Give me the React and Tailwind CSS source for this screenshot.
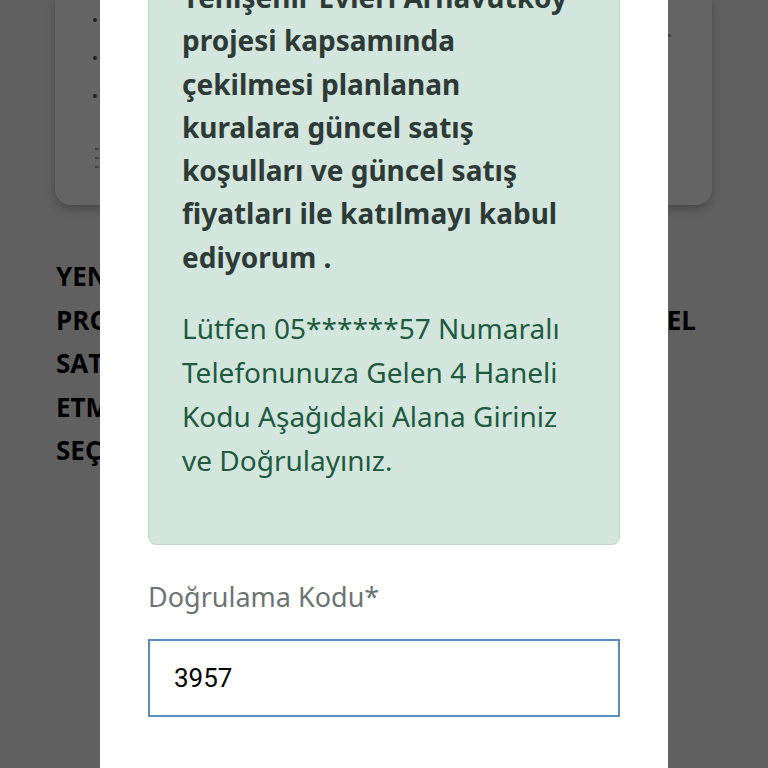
const approvalText =
  "Yenişehir Evleri Arnavutköy projesi kapsamında çekilmesi planlanan kuralara güncel satış koşulları ve güncel satış fiyatları ile katılmayı kabul ediyorum ."

const smsText =
  "Lütfen 05******57 Numaralı Telefonunuza Gelen 4 Haneli Kodu Aşağıdaki Alana Giriniz ve Doğrulayınız."

const BackgroundPage = () => (
  <div className="absolute inset-0 bg-[#606060]">
    <div className="mx-[55px] w-[657px] h-[205px] bg-[#656565] rounded-b-2xl shadow-[0_4px_8px_rgba(0,0,0,0.25)] relative">
      <div className="absolute left-[38px] top-[18px] flex flex-col gap-[34px]">
        <span className="w-1 h-1 rounded-full bg-[#222]" />
        <span className="w-1 h-1 rounded-full bg-[#222]" />
        <span className="w-1 h-1 rounded-full bg-[#222]" />
      </div>
      <div className="absolute left-[40px] top-[148px] flex flex-col gap-[7px]">
        <span className="w-[4px] h-[2px] bg-[#444]" />
        <span className="w-[4px] h-[2px] bg-[#444]" />
        <span className="w-[4px] h-[2px] bg-[#444]" />
      </div>
      <span className="absolute left-[612px] top-[34px] w-[4px] h-[3px] bg-[#444]" />
    </div>
    <div className="mt-[50px] ml-[56px] mr-[72px] font-['Open_Sans',sans-serif] font-bold text-[26px] leading-[43.5px] text-black">
      <div>YENİŞEHİR EVLERİ ARNAVUTKÖY</div>
      <div className="flex justify-between">
        <span>PROJESİ KAPSAMINDA</span>
        <span>GÜNCEL</span>
      </div>
      <div>SATIŞ KOŞULLARI</div>
      <div>ETMEK İÇİN</div>
      <div>SEÇİNİZ</div>
    </div>
  </div>
)

const VerifyModal = () => (
  <div className="absolute top-0 bottom-0 left-[100px] w-[568px] bg-white overflow-hidden font-['Noto_Sans',sans-serif]">
    <div className="-mt-[58px] px-[48px]">
      <div className="bg-[#d2e6de] border border-[#b9d9cb] rounded-lg pl-[33px] pr-[44px] pt-[33px] pb-[62px]">
        <p className="text-[#2e3a36] font-bold text-[28px] leading-[43.3px]">{approvalText}</p>
        <p className="mt-[27px] text-[#1f5a3e] text-[28px] leading-[44px]">{smsText}</p>
      </div>
      <label className="block mt-[32px] text-[#6c7473] text-[27px] leading-[40px]">Doğrulama Kodu*</label>
      <div className="mt-[22px] h-[78px] border-2 border-[#5a8dbf] flex items-center px-6">
        <span className="font-['Roboto',sans-serif] text-[26px] text-black">3957</span>
      </div>
    </div>
  </div>
)

export default function App() {
  return (
    <div className="relative w-[768px] h-[768px] overflow-hidden">
      <BackgroundPage />
      <VerifyModal />
    </div>
  )
}
